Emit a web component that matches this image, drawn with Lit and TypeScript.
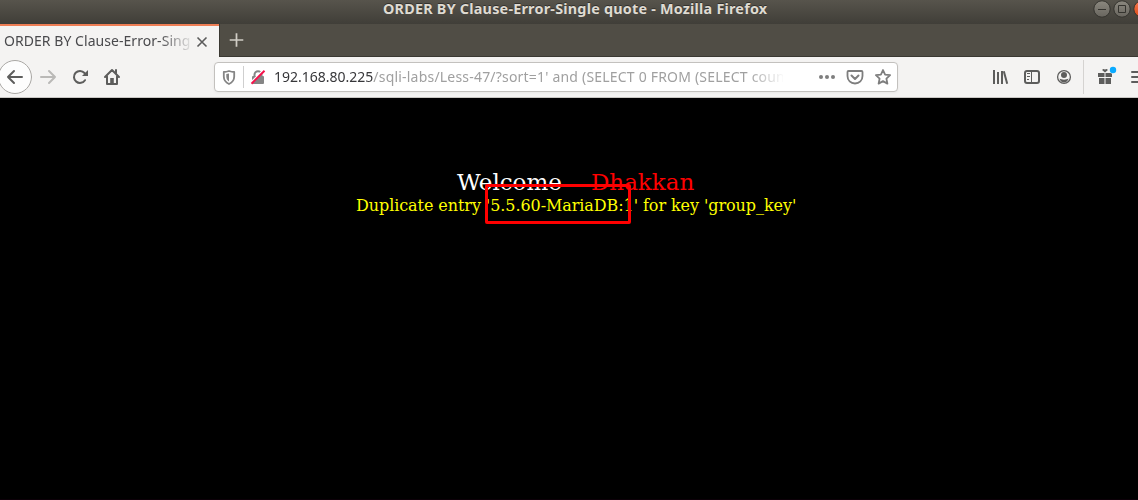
import { LitElement, html, css } from "lit";
import { customElement } from "lit/decorators.js";

@customElement("app-root")
export class AppRoot extends LitElement {
  static styles = css`
    :host { display: block; width: 1138px; height: 500px; overflow: hidden; background: #000; font-family: "Noto Sans", sans-serif; }
    * { box-sizing: border-box; }
    svg { display: block; flex: none; }
    .title { height: 24px; position: relative; background: linear-gradient(#57544c, #403e38); display: flex; }
    .title-text { margin-left: 383px; line-height: 18px; font-size: 14.4px; font-weight: 700; color: #dfdbd2; white-space: pre; letter-spacing: 0.21px; text-shadow: 0 -1px #33312d; }
    .window-buttons { position: absolute; right: 0; top: 0; }
    .tabs { height: 33px; display: flex; background: #504d45; border-bottom: 1px solid #3a3832; }
    .tab { width: 219px; height: 33px; background: #f4f3f2; border-top: 2px solid #ee7e55; display: flex; align-items: center; padding-left: 4px; }
    .tab-text { width: 187px; font-size: 14px; line-height: 20px; margin-top: -2px; color: #4a4a4d; white-space: pre; letter-spacing: 0.05px; -webkit-mask-image: linear-gradient(90deg, #000 155px, transparent 190px); mask-image: linear-gradient(90deg, #000 155px, transparent 190px); }
    .tab svg { margin-left: 5px; }
    .plus { width: 34px; height: 32px; border-left: 1px solid #3a3832; }
    .bar { height: 41px; background: #f4f3f2; border-bottom: 1px solid #c9c7c4; display: flex; }
    .nav { width: 214px; }
    .url { width: 684px; height: 30px; margin-top: 5px; border: 1px solid #c3c1be; border-radius: 4px; background: #fff; display: flex; box-shadow: 0 1px 3px #0000000d; }
    .url-text { width: 510px; padding-left: 1px; line-height: 28px; font-size: 14px; color: #a0a0a0; white-space: pre; -webkit-mask-image: linear-gradient(90deg, #000 475px, transparent 512px); mask-image: linear-gradient(90deg, #000 475px, transparent 512px); }
    .host { color: #37373a; letter-spacing: 0px; }
    .path { letter-spacing: 0.2px; }
    .page { height: 402px; padding-top: 70px; position: relative; font-family: "DejaVu Serif", serif; border-bottom: 1px solid #0c0008; }
    .welcome { display: flex; margin-left: 457px; font-size: 23px; line-height: 28px; color: #fff; white-space: pre; }
    .name { color: #f00; margin-left: 29px; }
    .error { margin-left: 356px; font-size: 16px; line-height: 19px; color: #ff0; white-space: pre; letter-spacing: -0.075px; }
    .marker { position: absolute; left: 485px; top: 86px; width: 146px; height: 40px; border: 3px solid #f00; border-radius: 2px; }
  `;

  render() {
    return html`
      <div class="title">
        <div class="title-text">ORDER BY Clause-Error-Single quote - Mozilla Firefox</div>
        <svg class="window-buttons" width="50" height="24" viewBox="1088 0 50 24" fill="none">
          <defs>
            <linearGradient id="grey" x2="0" y2="1"><stop stop-color="#8b887f" /><stop offset="1" stop-color="#68655e" /></linearGradient>
            <linearGradient id="orange" x2="0" y2="1"><stop stop-color="#f37950" /><stop offset="1" stop-color="#df4a16" /></linearGradient>
          </defs>
          <g stroke="#34332e">
            <circle cx="1102" cy="9" r="8.2" fill="url(#grey)" />
            <circle cx="1122" cy="9" r="8.2" fill="url(#grey)" />
            <circle cx="1142" cy="9" r="8.2" fill="url(#orange)" />
            <path d="M1098 9.5h8M1118.5 5.5h7v7h-7z" />
          </g>
        </svg>
      </div>
      <div class="tabs">
        <div class="tab">
          <div class="tab-text">ORDER BY Clause-Error-Sing</div>
          <svg width="12" height="12" viewBox="0 0 12 12" stroke="#5b5b5b" stroke-width="1.6"><path d="M1.5 1.5l9 9m0-9l-9 9" /></svg>
        </div>
        <svg class="plus" viewBox="219 24 34 32" stroke="#d0cdc5" stroke-width="1.8"><path d="M229 40h14M236 33v14" /></svg>
      </div>
      <div class="bar">
        <svg class="nav" height="40" viewBox="0 57 214 40" fill="none" stroke="#5d5d5c" stroke-width="2" stroke-linecap="round" stroke-linejoin="round">
          <circle cx="15" cy="77" r="16.5" fill="#fdfdfd" stroke="#aaa8a5" stroke-width="1" />
          <path d="M8 77h14M14 71l-6 6 6 6" />
          <path d="M41 77h14M49 71l6 6-6 6" stroke="#bab9b7" />
          <path d="M85 80.2A6 6 0 1 1 84.500 73" />
          <path d="M88 70v6h-6z" fill="#5d5d5c" stroke="none" />
          <path d="M105 77l7-7 7 7M107 76.5V84h10v-7.500" />
          <path d="M116 70v3" />
          <path d="M110.200 84v-6h3.600v6z" fill="#5d5d5c" stroke="none" />
        </svg>
        <div class="url">
          <svg width="58" height="28" viewBox="215 63 58 28" fill="none">
            <path d="M229 71c-2 .7-3.500 1-5.200 1v4.500c0 3.500 1.900 6 5.200 7.500 3.300-1.500 5.200-4 5.200-7.500V72c-1.700 0-3.200-.3-5.200-1z" stroke="#858585" stroke-width="1.8" stroke-linejoin="round" />
            <path d="M229 73.500v8c-1.800-1-2.700-2.700-2.700-5v-2.400z" fill="#858585" />
            <path d="M243.500 66v22" stroke="#cfcfcf" />
            <path d="M254.500 77v-2.300a3.500 3.500 0 0 1 7 0V77" stroke="#858585" stroke-width="2" />
            <rect x="252" y="76" width="12" height="8" rx="1" fill="#858585" />
            <path d="M250.500 83.500l13.500-13.500" stroke="#fff" stroke-width="2.600" />
            <path d="M251.500 83.700l13-13" stroke="#f4114a" stroke-width="2" />
          </svg>
          <div class="url-text"><span class="host">192.168.80.225</span><span class="path">/sqli-labs/Less-47/?sort=1' and (SELECT 0 FROM (SELECT coun</span></div>
          <svg width="114" height="28" viewBox="783 63 114 28" fill="none" stroke="#7e7e7e" stroke-width="1.8" stroke-linejoin="round" stroke-linecap="round">
            <g fill="#7e7e7e" stroke="none"><circle cx="821" cy="77" r="2" /><circle cx="827" cy="77" r="2" /><circle cx="833" cy="77" r="2" /></g>
            <path d="M848.500 71h13q1 0 1 1v4c0 4.500-3.200 7.500-7.500 7.500s-7.500-3-7.500-7.500v-4q0-1 1-1z" /><path d="M851.500 75.500l3.500 3.500 3.500-3.500" stroke-width="2" />
            <path d="M883 70l2.100 4.600 5 .6-3.700 3.400 1 5-4.400-2.500-4.400 2.500 1-5-3.700-3.400 5-.6z" />
          </svg>
        </div>
        <svg width="240" height="40" viewBox="898 57 240 40" fill="none" stroke="#5d5d5c">
          <path d="M994 70v14M998 72v12M1002 71v13" stroke-width="2" /><path d="M1003.800 71.200l3.400 12.600" stroke-width="2" />
          <rect x="1025" y="71" width="14" height="12" rx="2" stroke-width="2" /><path d="M1031.500 71v12M1027 73.500h3M1027 76.500h3M1027 79.500h2" stroke-width="1" />
          <circle cx="1064" cy="77" r="6.400" stroke-width="1.300" /><circle cx="1064" cy="75" r="3" fill="#5d5d5c" stroke="none" /><path d="M1059.500 78.500c2 1.500 7 1.500 9 0-.7 2.700-2.300 4-4.500 4s-3.800-1.300-4.500-4z" fill="#5d5d5c" stroke="none" />
          <path d="M1083.500 60v34" stroke="#d5d3d1" />
          <path d="M1098 73h6.500v4h-6.500zM1105.500 73h6.500v4h-6.500zM1099 78h5.500v6h-5.500zM1105.500 78h5.500v6h-5.500zM1105 72.500l-2.700-2.300q.2-2 2.700-.8 2.500-1.200 2.700.8z" fill="#5d5d5c" stroke="none" />
          <circle cx="1113" cy="70" r="3.700" fill="#f4f3f2" stroke="none" /><circle cx="1113" cy="70" r="3.200" fill="#0aaaff" stroke="none" />
          <path d="M1132 72h12M1132 77h12M1132 82h12" stroke-width="2" stroke-linecap="round" />
        </svg>
      </div>
      <div class="page">
        <div class="welcome"><span>Welcome</span><span class="name">Dhakkan</span></div>
        <div class="error">Duplicate entry '5.5.60-MariaDB:1' for key 'group_key'</div>
        <div class="marker"></div>
      </div>
    `;
  }
}
